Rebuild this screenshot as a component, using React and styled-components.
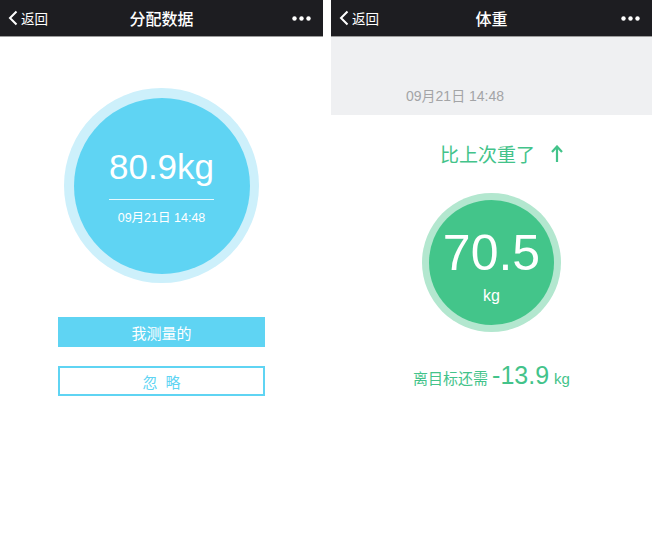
import React from "react";
import styled, { createGlobalStyle } from "styled-components";

const GlobalStyle = createGlobalStyle`
  body {
    margin: 0;
    background: #ffffff;
    font-family: "Liberation Sans", "Noto Sans CJK SC", sans-serif;
  }
`;

const Page = styled.div`
  display: flex;
  gap: 8px;
  width: 652px;
  height: 551px;
  background: #fff;
`;

const Screen = styled.div`
  width: ${(p) => p.$w}px;
  display: flex;
  flex-direction: column;
`;

const NavBar = styled.header`
  height: 36px;
  background: #1d1d21;
  border-bottom: 1px solid #9c9c9c;
  display: flex;
  align-items: center;
  justify-content: space-between;
  padding: 0 12px 0 8px;
  color: #fff;
  position: relative;
`;

const Back = styled.div`
  display: flex;
  align-items: center;
  gap: 2px;
  font-size: 13.5px;
  font-family: "Noto Sans CJK SC", sans-serif;
`;

const NavTitle = styled.div`
  position: absolute;
  left: 0;
  right: 0;
  text-align: center;
  font-size: 16px;
  font-weight: 500;
  font-family: "Noto Sans CJK SC", sans-serif;
  pointer-events: none;
`;

const Body = styled.div`
  display: flex;
  flex-direction: column;
  align-items: center;
`;

const Ring = styled.div`
  width: ${(p) => p.$size}px;
  height: ${(p) => p.$size}px;
  border-radius: 50%;
  background: ${(p) => p.$outer};
  display: flex;
  align-items: center;
  justify-content: center;
  margin-top: ${(p) => p.$top}px;
`;

const Disc = styled.div`
  width: ${(p) => p.$size}px;
  height: ${(p) => p.$size}px;
  border-radius: 50%;
  background: ${(p) => p.$bg};
  color: #fff;
  display: flex;
  flex-direction: column;
  align-items: center;
  justify-content: center;
`;

const BigValue = styled.div`
  font-size: 35px;
  line-height: 1;
  margin-top: 4px;
`;

const Divider = styled.div`
  width: 105px;
  height: 1px;
  background: rgba(255, 255, 255, 0.85);
  margin-top: 15px;
`;

const DateText = styled.div`
  font-size: 12.5px;
  margin-top: 7px;
`;

const Button = styled.div`
  width: 207px;
  height: 30px;
  box-sizing: border-box;
  display: flex;
  align-items: center;
  justify-content: center;
  font-size: 15px;
  font-family: "Noto Sans CJK SC", sans-serif;
  background: ${(p) => (p.$filled ? "#5fd4f3" : "#fff")};
  color: ${(p) => (p.$filled ? "#fff" : "#5fd4f3")};
  border: 2px solid #5fd4f3;
  letter-spacing: ${(p) => (p.$spaced ? "8px" : "0")};
  text-indent: ${(p) => (p.$spaced ? "8px" : "0")};
  margin-top: ${(p) => p.$top}px;
`;

const GrayBand = styled.div`
  height: 78px;
  background: #eff0f2;
  display: flex;
  align-items: flex-end;
  padding: 0 0 10px 75px;
  box-sizing: border-box;
  font-size: 14px;
  color: #a3a4a6;
`;

const Compare = styled.div`
  margin: 25px 0 0 20px;
  color: #43c38a;
  font-size: 19px;
  font-family: "Noto Sans CJK SC", sans-serif;
  display: flex;
  align-items: center;
  gap: 16px;
`;

const GreenValue = styled.div`
  font-size: 50px;
  line-height: 1;
  margin-top: 8px;
`;

const Unit = styled.div`
  font-size: 16px;
  margin-top: 9px;
`;

const Goal = styled.div`
  margin-top: 29px;
  color: #43c38a;
  display: flex;
  align-items: baseline;
  font-size: 15px;
  font-family: "Noto Sans CJK SC", sans-serif;
`;

const GoalNum = styled.span`
  font-size: 25px;
  font-family: "Liberation Sans", sans-serif;
  margin: 0 5px 0 4px;
`;

const GoalUnit = styled.span`
  font-family: "Liberation Sans", sans-serif;
  font-size: 15px;
`;

const Chevron = () => (
  <svg width="11" height="16" viewBox="0 0 11 16">
    <polyline points="8.5,1.5 2,8 8.5,14.5" fill="none" stroke="#fff" strokeWidth="2" />
  </svg>
);

const Dots = () => (
  <svg width="19" height="5" viewBox="0 0 19 5">
    <circle cx="2.5" cy="2.5" r="2.2" fill="#fff" />
    <circle cx="9.5" cy="2.5" r="2.2" fill="#fff" />
    <circle cx="16.5" cy="2.5" r="2.2" fill="#fff" />
  </svg>
);

const Arrow = () => (
  <svg width="12" height="18" viewBox="0 0 12 18">
    <line x1="6" y1="2" x2="6" y2="17" stroke="#43c38a" strokeWidth="2.2" />
    <polyline points="1,7 6,1.5 11,7" fill="none" stroke="#43c38a" strokeWidth="2.2" />
  </svg>
);

const Nav = ({ title }) => (
  <NavBar>
    <Back>
      <Chevron />
      返回
    </Back>
    <NavTitle>{title}</NavTitle>
    <Dots />
  </NavBar>
);

export default function App() {
  return (
    <Page>
      <GlobalStyle />
      <Screen $w={323}>
        <Nav title="分配数据" />
        <Body>
          <Ring $size={195} $outer="#cdf0fb" $top={51}>
            <Disc $size={176} $bg="#5fd4f3">
              <BigValue>80.9kg</BigValue>
              <Divider />
              <DateText>09月21日 14:48</DateText>
            </Disc>
          </Ring>
          <Button $filled $top={34}>我测量的</Button>
          <Button $spaced $top={19}>忽略</Button>
        </Body>
      </Screen>
      <Screen $w={321}>
        <Nav title="体重" />
        <GrayBand>09月21日 14:48</GrayBand>
        <Body>
          <Compare>
            比上次重了
            <Arrow />
          </Compare>
          <Ring $size={139} $outer="#b3e7cf" $top={26}>
            <Disc $size={125} $bg="#43c58a">
              <GreenValue>70.5</GreenValue>
              <Unit>kg</Unit>
            </Disc>
          </Ring>
          <Goal>
            离目标还需
            <GoalNum>-13.9</GoalNum>
            <GoalUnit>kg</GoalUnit>
          </Goal>
        </Body>
      </Screen>
    </Page>
  );
}
